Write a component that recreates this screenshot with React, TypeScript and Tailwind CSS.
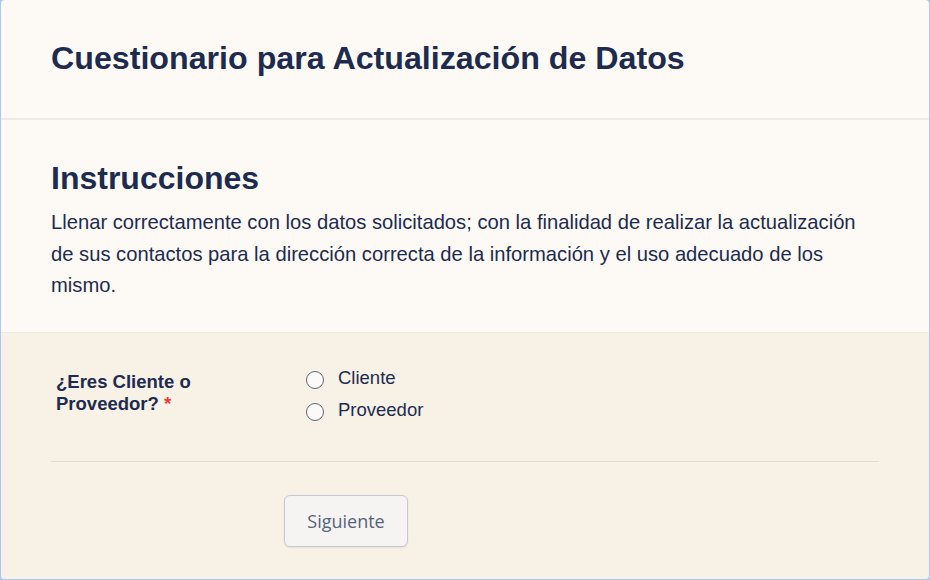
export default function App() {
  return (
    <div className="w-[930px] h-[580px] bg-[#a9c9f7] pl-px pr-px pb-px overflow-hidden" style={{ fontFamily: '"Liberation Sans", Arial, sans-serif' }}>
      <div className="h-full bg-[#fdfaf5] rounded-[4px] overflow-hidden flex flex-col">
        <div className="h-[120px] shrink-0 flex items-center px-[50px] border-b-2 border-[#eeeae5]">
          <h1 className="text-[32.2px] font-bold text-[#1d2b51] pb-[2px]">Cuestionario para Actualización de Datos</h1>
        </div>
        <div className="h-[213px] shrink-0 px-[50px] pt-[39px] rounded-t-[6px] border-b border-[#f0ebe3]">
          <h2 className="text-[32px] font-bold text-[#1d2b51] leading-[38px]">Instrucciones</h2>
          <p className="mt-[10px] text-[20.2px] leading-[31.5px] text-[#1d2b51] pr-[10px]">
            Llenar correctamente con los datos solicitados; con la finalidad de realizar la actualización de sus contactos para la dirección correcta de la información y el uso adecuado de los mismo.
          </p>
        </div>
        <div className="flex-1 bg-[#f8f1e6] px-[50px] pt-[34px]">
          <div className="flex pb-[40px] border-b border-[#e2ddd5]">
            <div className="w-[255px] pl-[5px] pt-[4px] text-[18.5px] font-bold text-[#1d2b51] leading-[22px]">
              ¿Eres Cliente o
              <br />
              Proveedor? <span className="text-[#f23a3a]">*</span>
            </div>
            <div className="flex flex-col gap-[9px] -mt-[1px]">
              {["Cliente", "Proveedor"].map((o) => (
                <label key={o} className="flex items-center gap-[14px] text-[18.5px] text-[#1d2b51] leading-[22px]">
                  <span className="w-[18px] h-[18px] rounded-full border-[1.5px] border-[#5b6577] bg-[#fbfaf8] mt-[5px]" />
                  {o}
                </label>
              ))}
            </div>
          </div>
          <div className="pt-[33px] pl-[233px]">
            <button
              className="w-[124px] h-[52px] rounded-[6px] border border-[#c5c9d1] bg-[#f5f4f2] text-[18px] text-[#57627c] shadow-[0_1px_2px_rgba(0,0,0,0.08)]"
              style={{ fontFamily: '"Open Sans", sans-serif' }}
            >
              Siguiente
            </button>
          </div>
        </div>
      </div>
    </div>
  );
}
